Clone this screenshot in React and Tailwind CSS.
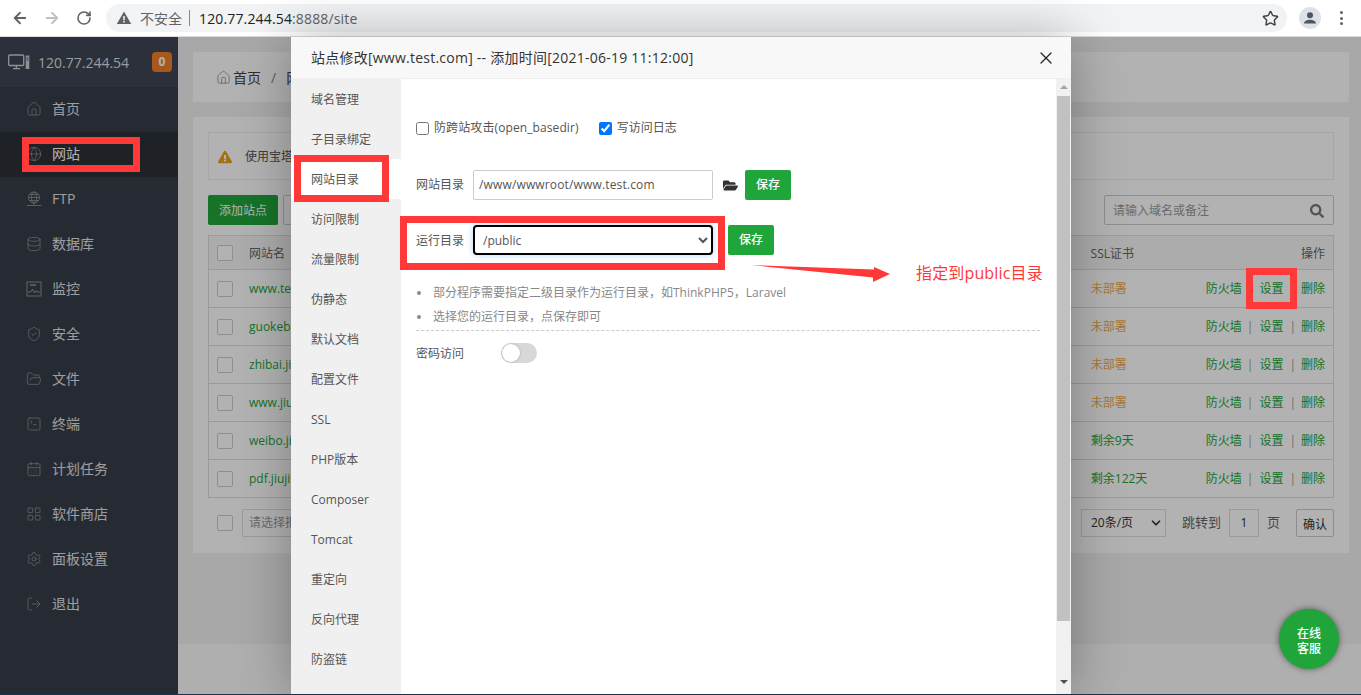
import {
  ArrowLeft, ArrowRight, RotateCw, Star, House, Globe, Database, ShieldCheck, FolderOpen,
  SquareTerminal, CalendarDays, LayoutGrid, Settings, LogOut, ChevronDown, X,
} from 'lucide-react';
import { FaFolderOpen, FaExclamationTriangle, FaSearch } from 'react-icons/fa';

const fontStack = "font-['Open_Sans','Noto_Sans_CJK_SC',sans-serif]";

function MonitorIcon({ className }) {
  return (
    <svg viewBox="0 0 22 16" className={className} fill="none" stroke="currentColor" strokeWidth="1.3">
      <rect x="0.7" y="1" width="15" height="10.5" rx="1" />
      <path d="M5 14.6h7M8.3 11.5v3" />
      <rect x="17.7" y="1.5" width="3.6" height="13.5" fill="currentColor" stroke="none" />
      <path d="M18.5 4h2M18.5 6h2" stroke="#3f4653" strokeWidth="1" />
    </svg>
  );
}

function FtpIcon({ className }) {
  return (
    <svg viewBox="0 0 16 16" className={className} fill="none" stroke="currentColor" strokeWidth="0.9">
      <circle cx="8" cy="6.5" r="5.5" />
      <ellipse cx="8" cy="6.5" rx="2.5" ry="5.5" />
      <path d="M2.5 6.5h11M3.5 3.5h9M3.5 9.5h9M8 12v2M0.5 14.5h15" />
    </svg>
  );
}

function ChartIcon({ className }) {
  return (
    <svg viewBox="0 0 16 16" className={className} fill="none" stroke="currentColor" strokeWidth="1">
      <rect x="1" y="1" width="14" height="14" />
      <path d="M2 11h3l1.5-3 2 4 1.5-2.5 1 1.5h3" />
      <path d="M4 4h6" strokeWidth="1.6" />
    </svg>
  );
}

function AvatarIcon() {
  return (
    <svg viewBox="0 0 22 22" className="w-[22px] h-[22px]">
      <circle cx="11" cy="11" r="11" fill="#dee1e6" />
      <circle cx="11" cy="8.2" r="3" fill="#4b5563" />
      <path d="M5 16.5c0-2.6 3.4-3.8 6-3.8s6 1.2 6 3.8z" fill="#4b5563" />
    </svg>
  );
}

const navItems = [
  { label: '首页', icon: House },
  { label: '网站', icon: Globe, active: true },
  { label: 'FTP', icon: FtpIcon },
  { label: '数据库', icon: Database },
  { label: '监控', icon: ChartIcon },
  { label: '安全', icon: ShieldCheck },
  { label: '文件', icon: FolderOpen },
  { label: '终端', icon: SquareTerminal },
  { label: '计划任务', icon: CalendarDays },
  { label: '软件商店', icon: LayoutGrid },
  { label: '面板设置', icon: Settings },
  { label: '退出', icon: LogOut },
];

const sites = [
  { name: 'www.test.com', ssl: '未部署' },
  { name: 'guokebao.com', ssl: '未部署' },
  { name: 'zhibai.jiuji.com', ssl: '未部署' },
  { name: 'www.jiuji.com', ssl: '未部署' },
  { name: 'weibo.jiuji.com', ssl: '剩余9天', ok: true },
  { name: 'pdf.jiuji.com', ssl: '剩余122天', ok: true },
];

const modalMenu = [
  '域名管理', '子目录绑定', '网站目录', '访问限制', '流量限制', '伪静态', '默认文档', '配置文件',
  'SSL', 'PHP版本', 'Composer', 'Tomcat', '重定向', '反向代理', '防盗链',
];

function Browser() {
  return (
    <div className="h-[37px] shrink-0 bg-white border-b border-[#dadce0] flex items-center text-[#5f6368]">
      <ArrowLeft className="w-[18px] h-[18px] ml-[11px]" strokeWidth={2.4} />
      <ArrowRight className="w-[18px] h-[18px] ml-[14px] text-[#bdc1c6]" strokeWidth={2.4} />
      <RotateCw className="w-[16px] h-[16px] ml-[15px]" strokeWidth={2.4} />
      <div className="ml-[14px] w-[1181px] h-[28px] rounded-full bg-[#f1f3f4] flex items-center pl-[10px] pr-[8px]">
        <svg viewBox="0 0 16 16" className="w-[16px] h-[16px]">
          <path d="M8 1.5 15.2 14H.8z" fill="#5f6368" />
          <path d="M7.3 6h1.4v4.2H7.3zM7.3 11h1.4v1.4H7.3z" fill="#fff" />
        </svg>
        <span className="ml-[8px] text-[14px] text-[#5f6368]">不安全</span>
        <span className="ml-[7px] w-px h-[16px] bg-[#80868b]" />
        <span className="ml-[9px] text-[14px] tracking-[0.15px] text-[#202124]">120.77.244.54<span className="text-[#5f6368]">:8888/site</span></span>
        <Star className="w-[17px] h-[17px] ml-auto text-[#3c4043]" strokeWidth={2} />
      </div>
      <div className="ml-[12px]"><AvatarIcon /></div>
      <div className="ml-[19px] flex flex-col gap-[2.5px]">
        <span className="w-[3px] h-[3px] rounded-full bg-[#5f6368]" />
        <span className="w-[3px] h-[3px] rounded-full bg-[#5f6368]" />
        <span className="w-[3px] h-[3px] rounded-full bg-[#5f6368]" />
      </div>
    </div>
  );
}

function Sidebar() {
  return (
    <aside className="w-[178px] shrink-0 bg-[#363d49]">
      <div className="h-[50px] bg-[#3f4653] flex items-center pl-[8px] pr-[6px] text-[#dedede]">
        <MonitorIcon className="w-[22px] h-[16px] text-[#cfcfcf]" />
        <span className="ml-[8px] text-[14px]">120.77.244.54</span>
        <span className="ml-auto w-[20px] h-[20px] rounded-[4px] bg-[#f07e26] flex items-center justify-center text-[12px] font-bold text-white">0</span>
      </div>
      {navItems.map((item) => {
        const Icon = item.icon;
        return (
          <div key={item.label} className={item.active ? 'h-[45px] pb-[2px] bg-[#2b3139] flex items-center pl-[26px] text-white' : 'h-[45px] pb-[2px] flex items-center pl-[26px] text-[#e2e2e2]'}>
            <Icon className="w-[16px] h-[16px] text-[#909090]" strokeWidth={1.2} />
            <span className="ml-[10px] text-[14px]">{item.label}</span>
          </div>
        );
      })}
    </aside>
  );
}

function CheckBox() {
  return <span className="block w-[16px] h-[16px] shrink-0 rounded-[2px] border border-[#ccc] bg-white" />;
}

function SiteRow({ site }) {
  return (
    <div className="h-[38px] border-t border-[#ddd] flex items-center pl-[8px] pr-[8px] text-[12px]">
      <CheckBox />
      <span className="ml-[16px] text-[#20a53a]">{site.name}</span>
      <span className={site.ok ? 'ml-auto w-[115px] text-[#20a53a]' : 'ml-auto w-[115px] text-[#f0ad4e]'}>{site.ssl}</span>
      <span className="text-[#20a53a]">防火墙</span>
      <span className="ml-[5px] text-[#999]">|</span>
      <span className="ml-[6px] text-[#20a53a]">设置</span>
      <span className="ml-[6px] text-[#999]">|</span>
      <span className="ml-[5px] text-[#20a53a]">删除</span>
    </div>
  );
}

function Content() {
  return (
    <main className="flex-1 min-w-0 flex flex-col">
      <div className="h-[607px] bg-[#f1f1f1] pl-[15px] pr-[12px] pt-[15px]">
        <div className="h-[50px] bg-white flex items-center pl-[23px] text-[14px] text-[#444]">
          <House className="w-[15px] h-[15px] text-[#888]" strokeWidth={1.2} />
          <span className="ml-[2px]">首页</span>
          <span className="ml-[10px] text-[#888]">/</span>
          <span className="ml-[10px]">网站管理</span>
        </div>
        <div className="mt-[15px] h-[436px] bg-white p-[15px]">
          <div className="h-[48px] pt-[2px] border border-[#eee] flex items-center pl-[9px] text-[12px] text-[#555]">
            <FaExclamationTriangle className="w-[14px] h-[14px] text-[#f0a01e]" />
            <span className="ml-[13px]">使用宝塔面板创建站点时会自动创建权限配置</span>
          </div>
          <div className="mt-[15px] h-[30px] flex items-stretch text-[12px]">
            <div className="w-[70px] pt-[2px] rounded-[2px] bg-[#20a53a] text-white flex items-center justify-center">添加站点</div>
            <div className="ml-[5px] w-[70px] rounded-[2px] border border-[#ccc]" />
            <div className="ml-auto w-[230px] pt-[2px] rounded-[2px] border border-[#ccc] flex items-center pl-[8px] pr-[9px] text-[#999]">
              请输入域名或备注
              <FaSearch className="ml-auto w-[14px] h-[14px] text-[#777]" />
            </div>
          </div>
          <div className="mt-[10px] border border-[#ddd] border-b-[#ddd]">
            <div className="h-[33px] bg-[#f6f6f6] flex items-center pl-[8px] pr-[8px] text-[12px] text-[#666]">
              <CheckBox />
              <span className="ml-[16px] pt-[2px]">网站名</span>
              <span className="ml-auto mr-[167px] pt-[2px]">SSL证书</span>
              <span className="pt-[2px]">操作</span>
            </div>
            {sites.map((site) => <SiteRow key={site.name} site={site} />)}
          </div>
          <div className="mt-[11px] h-[28px] flex items-center pl-[9px] text-[12px] text-[#666]">
            <CheckBox />
            <div className="ml-[9px] w-[120px] h-full rounded-[2px] border border-[#ddd] flex items-center pl-[6px] text-[#999]">请选择批量操作</div>
            <div className="ml-auto w-[85px] h-full border border-[#ddd] flex items-center pl-[9px] text-[#333]">
              20条/页
              <ChevronDown className="ml-auto mr-[2px] w-[14px] h-[14px]" strokeWidth={3} />
            </div>
            <span className="ml-[16px] text-[13px]">跳转到</span>
            <div className="ml-[8px] w-[30px] h-full border border-[#ddd] flex items-center justify-center text-[#333]">1</div>
            <span className="ml-[8px] text-[13px]">页</span>
            <div className="ml-[16px] w-[38px] h-full pt-[3px] rounded-[2px] border border-[#ccc] flex items-center justify-center text-[#333]">确认</div>
          </div>
        </div>
      </div>
      <div className="flex-1 bg-[#fbfbfb]" />
    </main>
  );
}

function SaveButton() {
  return <button className="w-[46px] h-[30px] rounded-[2px] bg-[#20a53a] text-white text-[12px] font-medium">保存</button>;
}

function Modal() {
  return (
    <div className="absolute left-[291px] top-0 bottom-0 w-[780px] bg-white shadow-[1px_1px_50px_rgba(0,0,0,0.3)] flex flex-col text-[12px] text-[#555]">
      <div className="h-[42px] shrink-0 bg-[#f8f8f8] border-b border-[#eee] flex items-center pl-[20px] pr-[15px] text-[14px] tracking-[0.24px] text-[#333]">
        站点修改[www.test.com] -- 添加时间[2021-06-19 11:12:00]
        <X className="ml-auto w-[20px] h-[20px] text-[#222]" strokeWidth={1.5} />
      </div>
      <div className="flex-1 min-h-0 flex">
        <div className="w-[110px] shrink-0 bg-[#f0f0f0]">
          {modalMenu.map((name) => (
            <div key={name} className={name === '网站目录' ? 'h-[40px] pt-[2px] bg-white flex items-center pl-[20px]' : 'h-[40px] pt-[2px] flex items-center pl-[20px]'}>{name}</div>
          ))}
        </div>
        <div className="flex-1 min-w-0 pl-[15px] pr-[16px]">
          <div className="mt-[40px] h-[18px] flex items-center">
            <input type="checkbox" className="w-[13px] h-[13px] m-0" />
            <span className="ml-[5px] tracking-[0.1px]">防跨站攻击(open_basedir)</span>
            <input type="checkbox" defaultChecked className="ml-[20px] w-[13px] h-[13px] m-0" />
            <span className="ml-[5px]">写访问日志</span>
          </div>
          <div className="mt-[33px] h-[30px] flex items-center">
            <span className="w-[57px]">网站目录</span>
            <div className="w-[240px] h-[30px] rounded-[2px] border border-[#ccc] flex items-center pl-[5px] text-[12px] tracking-[0.15px]">/www/wwwroot/www.test.com</div>
            <FaFolderOpen className="ml-[10px] w-[15px] h-[15px] text-[#333]" />
            <span className="ml-[7px]"><SaveButton /></span>
          </div>
          <div className="mt-[25px] h-[30px] flex items-center">
            <span className="w-[57px] pt-[2px]">运行目录</span>
            <select defaultValue="/public" className="w-[240px] h-[30px] rounded-[4px] border-2 border-black bg-white pl-[4px] text-[12px] shadow-[0_0_6px_rgba(102,175,233,0.5)]">
              <option value="/public">/public</option>
            </select>
            <span className="ml-[15px]"><SaveButton /></span>
          </div>
          <ul className="mt-[26px] text-[#888] leading-[23px]">
            <li className="flex items-center"><span className="w-[4px] h-[4px] ml-[1px] rounded-full bg-[#888]" /><span className="ml-[12px]">部分程序需要指定二级目录作为运行目录，如ThinkPHP5，Laravel</span></li>
            <li className="mt-[1px] flex items-center"><span className="w-[4px] h-[4px] ml-[1px] rounded-full bg-[#888]" /><span className="ml-[12px]">选择您的运行目录，点保存即可</span></li>
          </ul>
          <div className="mt-[2px] border-t border-dashed border-[#ccc]" />
          <div className="mt-[11px] h-[21px] flex items-center">
            <span className="w-[85px] pt-[2px]">密码访问</span>
            <span className="relative block w-[36px] h-[20px] rounded-full bg-[#d8d8d8]">
              <span className="absolute left-[1px] top-[1px] w-[18px] h-[18px] rounded-full bg-white shadow-[0_0_2px_rgba(0,0,0,0.3)]" />
            </span>
          </div>
        </div>
        <div className="w-[15px] shrink-0 bg-[#f1f1f1] flex flex-col items-center">
          <span className="mt-[6px] w-0 h-0 border-x-[4px] border-x-transparent border-b-[4px] border-b-[#a3a3a3]" />
          <span className="mt-[7px] w-[13px] h-[525px] bg-[#c1c1c1]" />
          <span className="mt-[59px] w-0 h-0 border-x-[4px] border-x-transparent border-t-[4px] border-t-[#505050]" />
        </div>
      </div>
    </div>
  );
}

// red marks someone drew over the screenshot
function Annotations() {
  return (
    <>
      <div className="absolute left-[22px] top-[137px] w-[118px] h-[35px] border-[7px] border-[#ff3838]" />
      <div className="absolute left-[294px] top-[155px] w-[95px] h-[47px] border-[7px] border-[#ff3838]" />
      <div className="absolute left-[400px] top-[216px] w-[325px] h-[54px] border-[7px] border-[#ff3838]" />
      <div className="absolute left-[1246px] top-[268px] w-[51px] h-[41px] border-[7px] border-[#ff3838]" />
      <svg className="absolute left-[750px] top-[260px] w-[145px] h-[26px]" viewBox="0 0 145 26">
        <polygon points="1,5 124,9.5 124,7 140,14 123,22 123,17.5" fill="#ff3838" />
      </svg>
      <span className="absolute left-[916px] top-[263px] text-[16px] leading-[20px] tracking-[0.15px] text-[#ff3838]">指定到public目录</span>
    </>
  );
}

export default function App() {
  return (
    <div className={`relative w-[1361px] h-[695px] overflow-hidden flex flex-col bg-white ${fontStack}`}>
      <Browser />
      <div className="relative flex-1 min-h-0 flex">
        <Sidebar />
        <Content />
        <div className="absolute inset-0 bg-black/30" />
        <Modal />
      </div>
      <Annotations />
      <div className="absolute right-[22px] top-[609px] w-[60px] h-[60px] pt-[3px] rounded-full bg-[#20a53a] shadow-[0_0_6px_rgba(0,0,0,0.5)] flex items-center justify-center text-center text-[12px] leading-[15px] font-medium text-white">
        在线<br />客服
      </div>
      <div className="absolute left-0 right-0 bottom-0 h-px bg-[#1f3247]" />
    </div>
  );
}
